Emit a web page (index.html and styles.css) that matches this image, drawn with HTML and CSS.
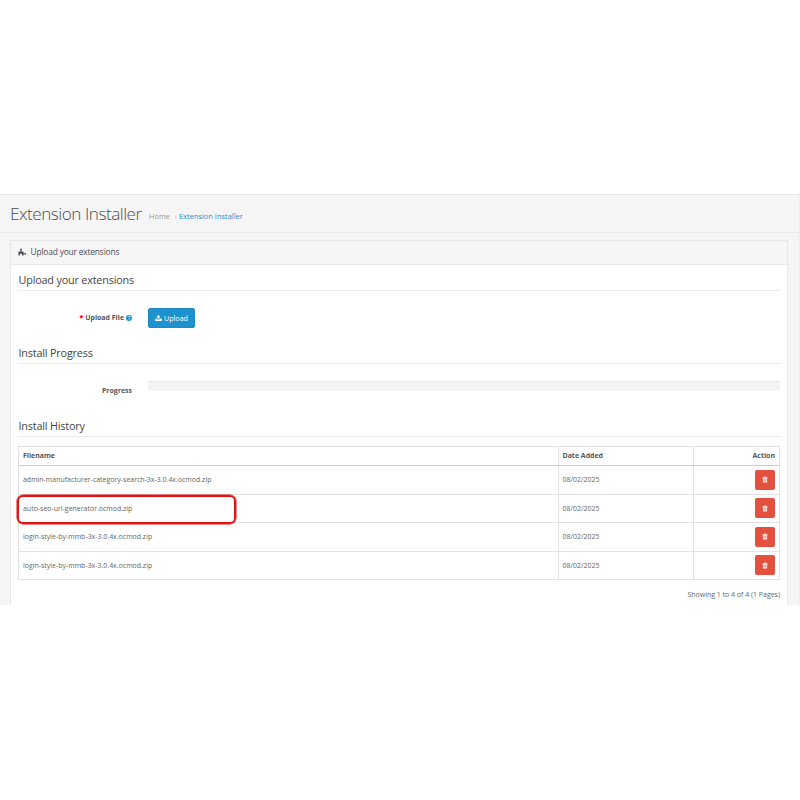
FILE: index.html
```
<!DOCTYPE html>
<html lang="en">
<head>
<meta charset="utf-8">
<title>Extension Installer</title>
<link rel="stylesheet" href="styles.css">
</head>
<body>
<svg class="sprite" aria-hidden="true">
  <symbol id="trash" viewBox="0 0 14 14"><path d="M5 0h4l1 2h3v2h-1v10H2V4H1V2h3zM5.500 1.200 5.200 2h3.600l-.3-.8zM4.200 5.500V11h1V5.500zm2.300 0V11h1V5.500zm2.300 0V11h1V5.500z" fill-rule="evenodd"/></symbol>
</svg>
<main class="content">
  <header class="page-header">
    <h1>Extension Installer</h1>
    <nav class="breadcrumb"><a>Home</a><span class="sep">›</span><a class="current">Extension Installer</a></nav>
  </header>
  <section class="panel">
    <div class="panel-heading">
      <svg class="puzzle" viewBox="0 0 18 16"><path d="M1 7h4V5C3.500 3.500 4 1 6 1s2.500 2.500 1 4v2h4v3.500c1.500 0 2-.5 3.500-.5 2.500 0 2.500 3 0 3-1.500 0-2-.5-3.500-.5V15H8c.3-2 .2-4-2-4s-2.300 2-2 4H1z"/></svg>
      <span>Upload your extensions</span>
    </div>
    <div class="panel-body">
      <h2>Upload your extensions</h2>
      <div class="form-row">
        <label><b class="star">*</b><span>Upload File</span><svg class="help" viewBox="0 0 14 14"><circle cx="7" cy="7" r="7"/><path d="M4.500 5.200c.2-3.200 5-3 5-.1 0 1.800-2.200 1.800-2.200 3.400M7.300 10v1.500" fill="none" stroke="#fff" stroke-width="1.700"/></svg></label>
        <button class="upload"><svg viewBox="0 0 16 14"><path d="M8 0l5 5h-3v4H6V5H3zM0 9h5v1.500h6V9h5v5H0z"/></svg><span>Upload</span></button>
      </div>
      <h2>Install Progress</h2>
      <div class="form-row">
        <label>Progress</label>
        <div class="progress"></div>
      </div>
      <h2>Install History</h2>
      <div class="table">
        <div class="row head"><div>Filename</div><div>Date Added</div><div class="action">Action</div></div>
        <div class="row"><div>admin-manufacturer-category-search-3x-3.0.4x.ocmod.zip</div><div>08/02/2025</div><div class="action"><button class="delete"><svg><use href="#trash"/></svg></button></div></div>
        <div class="row marked"><div>auto-seo-url-generator.ocmod.zip</div><div>08/02/2025</div><div class="action"><button class="delete"><svg><use href="#trash"/></svg></button></div></div>
        <div class="row"><div>login-style-by-mmb-3x-3.0.4x.ocmod.zip</div><div>08/02/2025</div><div class="action"><button class="delete"><svg><use href="#trash"/></svg></button></div></div>
        <div class="row"><div>login-style-by-mmb-3x-3.0.4x.ocmod.zip</div><div>08/02/2025</div><div class="action"><button class="delete"><svg><use href="#trash"/></svg></button></div></div>
      </div>
      <p class="results">Showing 1 to 4 of 4 (1 Pages)</p>
    </div>
  </section>
</main>
</body>
</html>
```
FILE: styles.css
```
*, *::after { box-sizing: border-box; }
body { margin: 0; padding-top: 194px; height: 800px; overflow: hidden; background: #fff; color: #666; font: 6.97px/10px "Open Sans", sans-serif; }
.sprite { display: none; }
svg { fill: currentColor; flex: none; }
button { border: 0; padding: 0; color: #fff; font: inherit; display: flex; align-items: center; justify-content: center; }
.content { height: 411px; overflow: hidden; background: #f5f5f5; border-top: 1px solid #e7e7e7; border-right: 1px solid #eee; }
.page-header { height: 38px; padding-left: 10px; border-bottom: 1px solid #eaeaea; display: flex; align-items: baseline; }
h1 { margin: 0; width: 139px; font-size: 17.1px; letter-spacing: -0.46px; font-weight: 300; line-height: 37px; color: #4c4c50; white-space: nowrap; }
.breadcrumb { display: flex; color: #999; font-size: 7.45px; position: relative; top: -1px; }
.breadcrumb a { white-space: nowrap; }
.breadcrumb .sep { width: 9px; padding-left: 2px; text-align: center; color: #bbb; }
.breadcrumb .current { color: #1e91cf; }
.panel { margin: 7px 11px 0 10px; height: 380px; background: #fff; border: 1px solid #e8e8e8; }
.panel-heading { height: 24px; padding: 0 0 1px 7px; display: flex; align-items: center; background: #f5f5f5; border-bottom: 1px solid #e8e8e8; color: #4c4d5a; font-size: 8.4px; letter-spacing: -0.17px; }
.puzzle { width: 9px; height: 8px; margin-right: 3.500px; }
.panel-body { padding: 5px 7px 0; }
h2 { margin: 0; height: 21px; padding-left: 0.5px; border-bottom: 1px solid #ebebeb; font-size: 10.8px; letter-spacing: -0.17px; line-height: 20px; font-weight: 400; color: #444; }
.form-row { display: flex; height: 52px; padding-top: 17px; }
label { width: 114px; margin-right: 16px; display: flex; justify-content: flex-end; align-items: center; gap: 2px; height: 20px; font-weight: 700; color: #555; }
.star { color: #e00; }
.help { width: 6px; height: 6px; color: #1e91cf; }
.upload { width: 47px; height: 20px; background: #1e91cf; border: 1px solid #2089c1; border-radius: 2px; gap: 2px; font-size: 7.1px; }
.upload svg { width: 7px; height: 6px; }
.upload span { margin-top: -1px; }
.progress { flex: 1; height: 10px; background: #f4f4f4; border-top: 1px solid #e9e9e9; }
.table { margin-top: 9px; border: 1px solid #e2e2e2; border-bottom: 0; }
.row { display: grid; grid-template-columns: 540px 135px 1fr; height: 28.5px; border-bottom: 1px solid #e2e2e2; position: relative; }
.row > div { padding: 0.5px 4px 0; display: flex; align-items: center; border-right: 1px solid #e2e2e2; }
.row > div + div { padding-left: 3.500px; }
.row > div:last-child { border-right: 0; padding-top: 0; }
.row .action { justify-content: flex-end; }
.row.head { height: 19px; border-bottom-color: #ccc; font-weight: 700; color: #555; }
.row.head > div { padding-top: 0; }
.delete { width: 20px; height: 20px; background: #e3503e; border-radius: 2px; }
.delete svg { width: 6px; height: 7px; color: #fbe9e7; }
.marked::after { content: ""; position: absolute; left: -2px; top: 0; width: 219px; height: 29px; border: 2px solid #e51212; border-radius: 6px; box-shadow: 0 0 0 0.5px #e51212; }
.results { margin: 10px 0 0; text-align: right; }
```
